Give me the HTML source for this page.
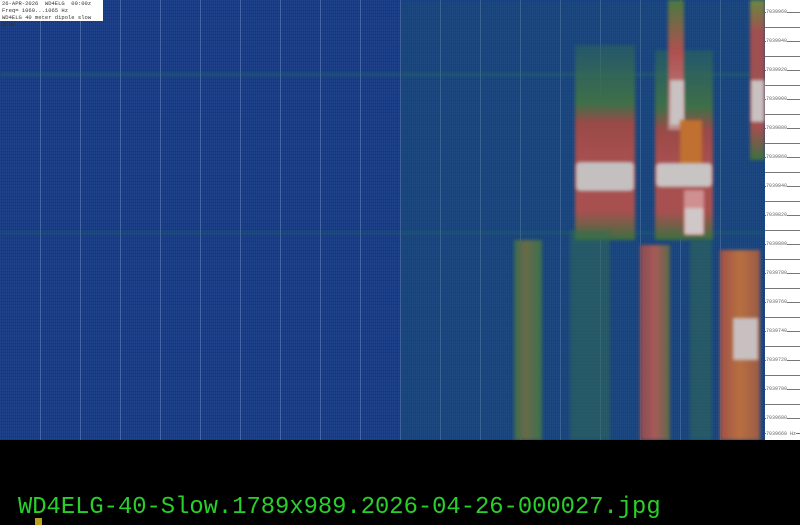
<!DOCTYPE html>
<html><head><meta charset="utf-8"><style>
*{margin:0;padding:0}
body{width:800px;height:525px;background:#000;position:relative;overflow:hidden;font-family:"Liberation Mono",monospace}
#spec{position:absolute;left:0;top:0;width:765px;height:440px;background:#1a3a86;overflow:hidden;
background-image:repeating-linear-gradient(0deg,rgba(0,0,0,.08) 0 1px,transparent 1px 3px),repeating-linear-gradient(90deg,rgba(40,90,160,.25) 0 1px,transparent 1px 2px);}
.b{position:absolute;filter:blur(1.5px)}
.v{position:absolute;top:0;height:440px;width:1px;background:rgba(170,190,230,.3)}
#scale{position:absolute;left:765px;top:0;width:35px;height:440px;background:#fff}
.t{position:absolute;left:0;width:35px;height:1px;background:#777}
.l{position:absolute;left:1px;font-size:5px;color:#666;line-height:6px;background:#fff}
#hdr{position:absolute;left:0;top:0;width:103px;height:21px;background:#fff;font-size:5.5px;line-height:7px;color:#333;padding-left:2px;box-sizing:border-box}
#name{position:absolute;left:18px;top:495px;color:#2ad02a;font-size:23.8px;line-height:26px;white-space:pre}
#cur{position:absolute;left:35px;top:518px;width:7px;height:7px;background:#b8a020}
</style></head><body>
<div id="spec">
<div class="v" style="left:40px"></div><div class="v" style="left:80px"></div><div class="v" style="left:120px"></div><div class="v" style="left:160px"></div><div class="v" style="left:200px"></div><div class="v" style="left:240px"></div><div class="v" style="left:280px"></div><div class="v" style="left:320px"></div><div class="v" style="left:360px"></div><div class="v" style="left:400px"></div><div class="v" style="left:440px"></div><div class="v" style="left:480px"></div><div class="v" style="left:520px"></div><div class="v" style="left:560px"></div><div class="v" style="left:600px"></div><div class="v" style="left:640px"></div><div class="v" style="left:680px"></div><div class="v" style="left:720px"></div>
<div class="b" style="left:400px;top:0;width:365px;height:440px;background:rgba(30,90,110,.3)"></div>
<div class="b" style="left:0;top:73px;width:765px;height:3px;background:rgba(40,120,90,.4)"></div>
<div class="b" style="left:0;top:232px;width:765px;height:2px;background:rgba(40,120,90,.4)"></div>
<div class="b" style="left:575px;top:45px;width:60px;height:195px;background:linear-gradient(rgba(45,106,90,.5) 0,#3f7048 30%,#9a4a48 40%,#a85050 60%,#a85050 85%,#3d7040 100%)"></div>
<div class="b" style="left:576px;top:162px;width:58px;height:29px;background:#c4c0c0;border-radius:4px"></div>
<div class="b" style="left:655px;top:50px;width:58px;height:190px;background:linear-gradient(rgba(45,106,90,.5) 0,#3f7048 30%,#9a4a48 42%,#a85050 60%,#a85050 85%,#3d7040 100%)"></div>
<div class="b" style="left:668px;top:0;width:16px;height:130px;background:linear-gradient(#4a7a40,#b05050 40%,#c09090)"></div>
<div class="b" style="left:670px;top:80px;width:14px;height:45px;background:#c8c2c2"></div>
<div class="b" style="left:680px;top:120px;width:22px;height:50px;background:#c07030"></div>
<div class="b" style="left:656px;top:163px;width:56px;height:24px;background:#c8c4c4;border-radius:4px"></div>
<div class="b" style="left:684px;top:190px;width:20px;height:45px;background:#d09090"></div>
<div class="b" style="left:685px;top:208px;width:18px;height:26px;background:#d0c8c8"></div>
<div class="b" style="left:750px;top:0;width:15px;height:160px;background:linear-gradient(#6a8a40,#a05050 20%,#a05050 80%,#3d7040)"></div>
<div class="b" style="left:751px;top:80px;width:13px;height:42px;background:#c8c2c2"></div>
<div class="b" style="left:514px;top:240px;width:28px;height:200px;background:linear-gradient(90deg,#3a6a50,#6a6a48 40%,#3a7050)"></div>
<div class="b" style="left:570px;top:230px;width:40px;height:210px;background:rgba(50,110,80,.5)"></div>
<div class="b" style="left:640px;top:245px;width:30px;height:195px;background:linear-gradient(90deg,#8a4a50,#a85a58 50%,#5a6a48)"></div>
<div class="b" style="left:690px;top:240px;width:22px;height:200px;background:rgba(50,110,80,.5)"></div>
<div class="b" style="left:720px;top:250px;width:40px;height:190px;background:linear-gradient(90deg,#a05048,#b87040 50%,#9a5a48)"></div>
<div class="b" style="left:733px;top:318px;width:25px;height:42px;background:#c8c0c0"></div>
</div>
<div id="hdr">26-APR-2026 &nbsp;WD4ELG &nbsp;00:00z<br>Freq= 1060...1065 Hz<br>WD4ELG 40 meter dipole slow grab</div>
<div id="scale">
<div class="t" style="top:12px"></div><div class="t" style="top:27px"></div><div class="t" style="top:41px"></div><div class="t" style="top:56px"></div><div class="t" style="top:70px"></div><div class="t" style="top:85px"></div><div class="t" style="top:99px"></div><div class="t" style="top:114px"></div><div class="t" style="top:128px"></div><div class="t" style="top:143px"></div><div class="t" style="top:157px"></div><div class="t" style="top:172px"></div><div class="t" style="top:186px"></div><div class="t" style="top:201px"></div><div class="t" style="top:215px"></div><div class="t" style="top:230px"></div><div class="t" style="top:244px"></div><div class="t" style="top:259px"></div><div class="t" style="top:273px"></div><div class="t" style="top:288px"></div><div class="t" style="top:302px"></div><div class="t" style="top:317px"></div><div class="t" style="top:331px"></div><div class="t" style="top:346px"></div><div class="t" style="top:360px"></div><div class="t" style="top:375px"></div><div class="t" style="top:389px"></div><div class="t" style="top:404px"></div><div class="t" style="top:418px"></div><div class="t" style="top:433px"></div>
<div class="l" style="top:9px">7039960</div><div class="l" style="top:38px">7039940</div><div class="l" style="top:67px">7039920</div><div class="l" style="top:96px">7039900</div><div class="l" style="top:125px">7039880</div><div class="l" style="top:154px">7039860</div><div class="l" style="top:183px">7039840</div><div class="l" style="top:212px">7039820</div><div class="l" style="top:241px">7039800</div><div class="l" style="top:270px">7039780</div><div class="l" style="top:299px">7039760</div><div class="l" style="top:328px">7039740</div><div class="l" style="top:357px">7039720</div><div class="l" style="top:386px">7039700</div><div class="l" style="top:415px">7039680</div><div class="l" style="top:431px">7039660 Hz</div>
</div>
<div id="name">WD4ELG-40-Slow.1789x989.2026-04-26-000027.jpg</div>
<div id="cur"></div>
</body></html>
